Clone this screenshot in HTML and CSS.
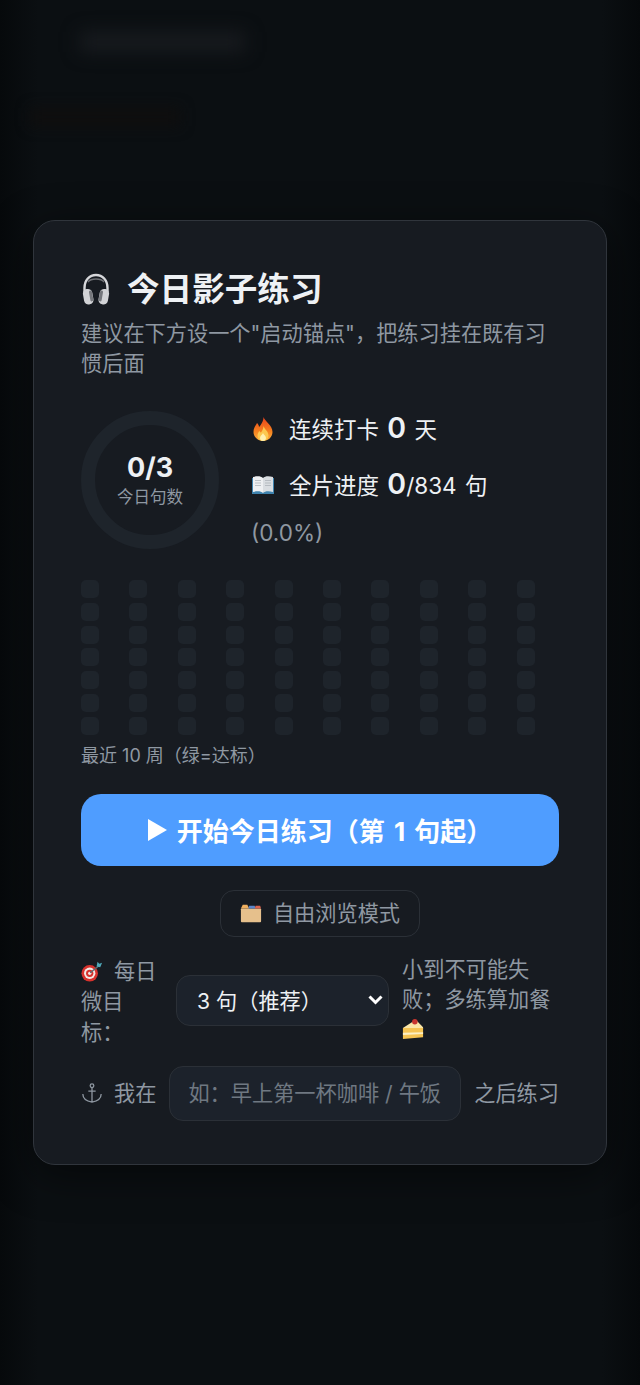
FILE: index.html
```html
<!DOCTYPE html>
<html lang="zh">
<head>
    <meta charset="utf-8">
    <title>今日影子练习</title>
    <link rel="stylesheet" href="styles.css">
</head>
<body>
    <div class="backdrop">
        <div class="blur-title"></div>
        <div class="blur-tabs"></div>
    </div>
    <div class="overlay">
        <div class="card">
            <h2 class="title">
                <svg class="title-icon" viewBox="0 0 30 32">
                    <path d="M3.500 19V15C3.500 7 8.500 2 15 2s11.500 5 11.500 13v4" fill="none" stroke="#d6d7da" stroke-width="2.4"/>
                    <path d="M7 9c3-4 13-4 16 0" fill="none" stroke="#6f7176" stroke-width="1.400"/>
                    <rect x="2.500" y="16" width="9.500" height="15.500" rx="4.500" transform="rotate(-10 7 24)" fill="#d2d3d6"/>
                    <rect x="18" y="16" width="9.500" height="15.500" rx="4.500" transform="rotate(10 23 24)" fill="#d2d3d6"/>
                    <rect x="8.800" y="18" width="3" height="11" rx="1.500" transform="rotate(-10 7 24)" fill="#75777c"/>
                    <rect x="18.200" y="18" width="3" height="11" rx="1.500" transform="rotate(10 23 24)" fill="#75777c"/>
                </svg>
                <span>今日影子练习</span>
            </h2>
            <p class="subtitle">建议在下方设一个"启动锚点"，把练习挂在既有习惯后面</p>

            <div class="summary">
                <div class="ring">
                    <div class="ring-value">0/3</div>
                    <div class="ring-label">今日句数</div>
                </div>
                <div class="stats">
                    <div class="stat-line">
                        <svg class="stat-icon" viewBox="0 0 24 24">
                            <defs>
                                <linearGradient id="flame" x1="0" y1="0" x2="0" y2="1">
                                    <stop offset="0" stop-color="#e8401c"/>
                                    <stop offset="0.6" stop-color="#f5821f"/>
                                    <stop offset="1" stop-color="#fbb040"/>
                                </linearGradient>
                            </defs>
                            <path d="M12.500 0c1 4 9 8 9 15 0 5-4.500 9-9.500 9s-9.500-4-9.500-9c0-4 2-6 3.500-9 1 1 2 2 2 4 2-2 4.500-6 4.500-10z" fill="url(#flame)"/>
                            <path d="M12.500 9c.5 3 5 5 5 9.500 0 3-2.500 5.500-5.500 5.500s-5.500-2.500-5.500-5.500c0-2 1-3.500 2-4.500.5 1 1 1.500 1.500 1.500C11 14 12.500 12 12.500 9z" fill="#fcc850"/>
                            <path d="M12 16c.5 1.500 3 3 3 5s-1.500 3-3 3-3-1-3-3 2.500-3.500 3-5z" fill="#fff0b0"/>
                        </svg>
                        <span class="stat-text">连续打卡 <b class="num">0</b> 天</span>
                    </div>
                    <div class="stat-line">
                        <svg class="stat-icon" viewBox="0 0 24 24">
                            <path d="M1 5h22v16H1z" fill="#3f83ae"/>
                            <path d="M2 4c4-1 8-1 10 1v15c-2-2-6-2-10-1z" fill="#eef0f2"/>
                            <path d="M22 4c-4-1-8-1-10 1v15c2-2 6-2 10-1z" fill="#d9dde1"/>
                            <path d="M4 7.500h6M4 10h6M4 12.500h6M14 7.500h6M14 10h6M14 12.500h6" stroke="#a6acb3" stroke-width=".7"/>
                        </svg>
                        <span class="stat-text">全片进度 <b class="num">0</b>/834 句</span>
                    </div>
                    <div class="stat-percent">(0.0%)</div>
                </div>
            </div>

            <div class="heatmap" id="heatmap"></div>
            <div class="heatmap-note">最近 10 周（绿=达标）</div>

            <button class="btn-primary">
                <svg class="play" viewBox="0 0 19 22"><path d="M0 0l19 11L0 22z" fill="#fff"/></svg>
                <span>开始今日练习（第 1 句起）</span>
            </button>

            <div class="browse-wrap">
                <button class="btn-ghost">
                    <svg class="btn-icon" viewBox="0 0 24 24">
                        <rect x="1" y="7" width="22" height="15" rx="1" fill="#e6c08c"/>
                        <path d="M1 7l2-4h5l2 4z" fill="#f0b060"/>
                        <path d="M9 7l1-3h6l1 3z" fill="#5c86c9"/>
                        <path d="M16 7l1-3h5l1 3z" fill="#d9634f"/>
                    </svg>
                    <span class="btn-text">自由浏览模式</span>
                </button>
            </div>

            <div class="goal-row">
                <label class="goal-label">
                    <svg class="inline-icon" viewBox="0 0 24 24">
                        <circle cx="9.500" cy="14.500" r="9" fill="#d8322d"/>
                        <circle cx="9.500" cy="14.500" r="6.200" fill="#f4e9e4"/>
                        <circle cx="9.500" cy="14.500" r="4" fill="#d8322d"/>
                        <circle cx="9.500" cy="14.500" r="1.800" fill="#f4e9e4"/>
                        <path d="M10 14L20 6" stroke="#5d6a70" stroke-width="1.500"/>
                        <path d="M17 7l1-5 2 2 3-1-2 5z" fill="#4fa8b8"/>
                    </svg>每日微目标：
                </label>
                <div class="select-wrap">
                    <select class="goal-select">
                        <option>3 句（推荐）</option>
                    </select>
                    <svg class="chevron" viewBox="0 0 15 10"><path d="M1.500 1.500l6 6 6-6" fill="none" stroke="#fff" stroke-width="3"/></svg>
                </div>
                <div class="goal-hint">小到不可能失败；多练算加餐
                    <svg class="inline-icon" viewBox="0 0 24 24">
                        <path d="M1 11L15 2l8 8v2z" fill="#fbe7a8"/>
                        <path d="M1 11h22v10L1 23z" fill="#f6c453"/>
                        <path d="M1 16l22-.5v2L1 18.500z" fill="#fdf0c4"/>
                        <circle cx="14" cy="4" r="3" fill="#c8352f"/>
                    </svg>
                </div>
            </div>

            <div class="anchor-row">
                <label class="anchor-label">
                    <svg class="inline-icon" viewBox="0 0 24 24" fill="none" stroke="#8f98a2" stroke-width="1.400">
                        <circle cx="12" cy="4" r="2"/>
                        <path d="M12 6v16M8 10h8M2 13c0 5 5 8 10 9 5-1 10-4 10-9"/>
                    </svg>我在
                </label>
                <input class="anchor-input" type="text" placeholder="如：早上第一杯咖啡 / 午饭">
                <span class="anchor-after">之后练习</span>
            </div>
        </div>
    </div>

    <script>
        // 70 empty day cells, filled column by column
        const heatmap = document.getElementById('heatmap');
        for (let i = 0; i < 70; i++) {
            const cell = document.createElement('div');
            cell.className = 'heat-cell';
            heatmap.appendChild(cell);
        }
    </script>
</body>
</html>
```
FILE: styles.css
```css
* {
    box-sizing: border-box;
}
html, body {
    height: 100%;
}
body {
    margin: 0;
    background-color: #0a0e12;
    color: #eef1f4;
    font-family: "Inter", "Noto Sans CJK SC", sans-serif;
    overflow: hidden;
}
.backdrop {
    position: absolute;
    inset: 0;
    background: linear-gradient(90deg, #06090b 0%, #0b0f12 6%, #0b0f12 94%, #06090b 100%);
}
.blur-title {
    position: absolute;
    left: 80px;
    top: 32px;
    width: 165px;
    height: 20px;
    background-color: #181b1f;
    filter: blur(9px);
}
.blur-tabs {
    position: absolute;
    left: 30px;
    top: 108px;
    width: 150px;
    height: 18px;
    background-color: #0f0e0e;
    filter: blur(7px);
}
.overlay {
    position: relative;
    height: 100%;
    display: flex;
    align-items: center;
    justify-content: center;
}
.card {
    width: 574px;
    height: 945px;
    padding: 46px 47px;
    background-color: #171b21;
    border: 1px solid #30353c;
    border-radius: 22px;
    box-shadow: 0 10px 40px rgba(0,0,0,0.5);
}
.title {
    display: flex;
    align-items: center;
    gap: 16px;
    margin: 0;
    font-size: 32.6px;
    line-height: 44px;
    font-weight: 700;
}
.title-icon {
    width: 30px;
    height: 32px;
}
.subtitle {
    margin: 7px 0 0;
    font-size: 21.2px;
    line-height: 30px;
    color: #8f98a2;
}
.summary {
    display: flex;
    align-items: center;
    gap: 32px;
    margin-top: 24px;
}
.ring {
    flex: none;
    width: 138px;
    height: 138px;
    border: 14px solid #1e242b;
    border-radius: 50%;
    display: flex;
    flex-direction: column;
    align-items: center;
    justify-content: center;
}
.ring-value {
    font-size: 27px;
    line-height: 34px;
    font-weight: 700;
}
.ring-label {
    font-size: 16.5px;
    line-height: 24px;
    color: #8f98a2;
}
.stats {
    flex: 1;
    padding-bottom: 6px;
}
.stat-line {
    display: flex;
    align-items: center;
    gap: 14px;
    height: 56px;
    font-size: 22.5px;
    word-spacing: 2px;
}
.stat-text {
    padding-bottom: 5px;
}
.stat-icon {
    flex: none;
    width: 24px;
    height: 24px;
    margin-bottom: 2px;
}
.num {
    font-size: 28.5px;
    font-weight: 600;
}
.stat-percent {
    font-size: 22.5px;
    line-height: 38px;
    color: #8f98a2;
}
.heatmap {
    display: grid;
    grid-template-columns: repeat(10, 18px);
    grid-template-rows: repeat(7, 18px);
    grid-auto-flow: column;
    column-gap: 30.4px;
    row-gap: 4.8px;
    margin-top: 22px;
}
.heat-cell {
    background-color: #1e242b;
    border-radius: 5px;
}
.heatmap-note {
    margin-top: 8px;
    font-size: 18px;
    line-height: 26px;
    color: #8f98a2;
}
.btn-primary {
    display: flex;
    align-items: center;
    justify-content: center;
    gap: 10px;
    width: 100%;
    height: 72px;
    margin-top: 25px;
    background-color: #4f9dff;
    color: #fff;
    border: none;
    border-radius: 20px;
    font-family: inherit;
    font-size: 26px;
    font-weight: 700;
    word-spacing: 3px;
}
.play {
    width: 19px;
    height: 22px;
}
.browse-wrap {
    display: flex;
    justify-content: center;
    margin-top: 24px;
}
.btn-ghost {
    display: flex;
    align-items: center;
    gap: 11px;
    height: 47px;
    padding: 0 19px;
    background: transparent;
    color: #8f98a2;
    border: 1px solid #2b3037;
    border-radius: 14px;
    font-family: inherit;
    font-size: 21.2px;
}
.btn-text {
    padding-bottom: 4px;
}
.btn-icon {
    width: 22px;
    height: 22px;
}
.goal-row {
    display: flex;
    align-items: center;
    gap: 13px;
    margin-top: 19px;
    font-size: 21.2px;
    line-height: 30.5px;
    color: #8f98a2;
}
.goal-label {
    flex: none;
    width: 82px;
}
.inline-icon {
    width: 22px;
    height: 22px;
    margin-right: 11px;
    vertical-align: -3px;
}
.select-wrap {
    position: relative;
    flex: none;
    width: 213px;
    margin-bottom: 2px;
}
.goal-select {
    display: block;
    appearance: none;
    width: 100%;
    height: 51px;
    padding: 0 20px;
    background-color: #1c222b;
    color: #eef1f4;
    border: 1px solid #2b3037;
    border-radius: 14px;
    font-family: inherit;
    font-size: 21.2px;
}
.chevron {
    position: absolute;
    right: 6px;
    top: 20px;
    width: 15px;
    height: 10px;
}
.goal-hint {
    flex: 1;
    align-self: flex-start;
    line-height: 30px;
    margin-top: -2px;
}
.anchor-row {
    display: flex;
    align-items: center;
    gap: 13px;
    margin-top: 18.5px;
    font-size: 21.2px;
    color: #8f98a2;
}
.anchor-label {
    flex: none;
    padding-bottom: 3px;
}
.anchor-input {
    flex: 1;
    min-width: 0;
    height: 55px;
    padding: 0 18px;
    background-color: #1c222b;
    color: #eef1f4;
    border: 1px solid #2b3037;
    border-radius: 14px;
    font-family: inherit;
    font-size: 21.2px;
}
.anchor-input::placeholder {
    color: #6f7882;
}
.anchor-after {
    flex: none;
    padding-bottom: 3px;
}
```
